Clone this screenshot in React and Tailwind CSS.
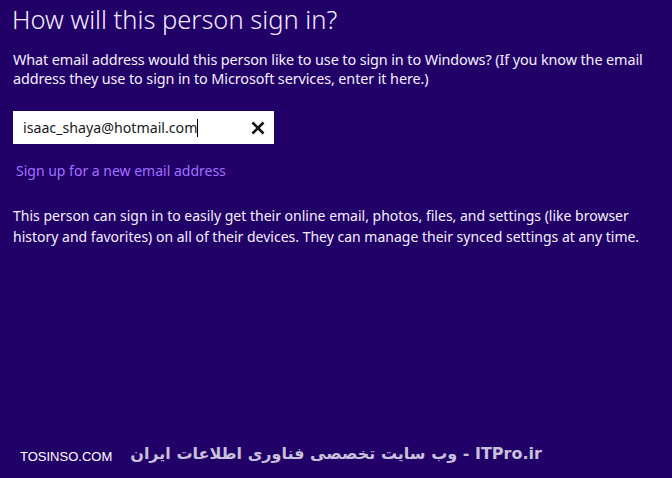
import React from "react";

const App = () => {
  return (
    <div className="w-[672px] h-[478px] bg-[#210068] text-white overflow-hidden flex flex-col" style={{ fontFamily: '"Noto Sans", "Open Sans", sans-serif' }}>
      <main className="flex-1 pl-[12px] pr-2">
        <h1 className="text-[25.5px] font-light leading-[34px] mt-[2px] text-[#f2ecff]">How will this person sign in?</h1>

        <p className="mt-[14px] text-[14.4px] leading-[19px] text-[#f4f0ff] pl-[1px] tracking-[-0.1px]">
          What email address would this person like to use to sign in to Windows? (If you know the email
          address they use to sign in to Microsoft services, enter it here.)
        </p>

        {/* Email input */}
        <div className="mt-[23px] ml-[1px] w-[261px] h-[33px] bg-white flex items-center pl-[10px] pr-[9px]">
          <span className="text-[14.2px] text-[#1a1a1a] flex-1">
            isaac_shaya@hotmail.com<span className="inline-block w-[1px] h-[18px] bg-black align-middle -mt-[2px]"></span>
          </span>
          <svg width="14" height="14" viewBox="0 0 14 14">
            <path d="M1.5 1.5 L12.5 12.5 M12.5 1.5 L1.5 12.5" stroke="#111" strokeWidth="2.6" />
          </svg>
        </div>

        <div className="mt-[17px] ml-[4px] text-[14px] leading-[20px] text-[#a070ff]">Sign up for a new email address</div>

        <p className="mt-[24px] ml-[1px] text-[14px] leading-[21px] text-[#f4f0ff]">
          This person can sign in to easily get their online email, photos, files, and settings (like browser
          history and favorites) on all of their devices. They can manage their synced settings at any time.
        </p>
      </main>

      {/* Watermark footer */}
      <div className="h-[46px] flex items-start pl-[20px] pt-[10px] gap-[18px]">
        <span className="text-[13px] text-white mt-[5px]" style={{ fontFamily: '"Liberation Sans", Arial, sans-serif' }}>TOSINSO.COM</span>
        <span dir="rtl" className="text-[16px] font-bold text-[#c8c0dc]" style={{ fontFamily: '"DejaVu Sans", "Liberation Sans", sans-serif' }}>
          ITPro.ir - وب سایت تخصصی فناوری اطلاعات ایران
        </span>
      </div>
    </div>
  );
};

export default App;
